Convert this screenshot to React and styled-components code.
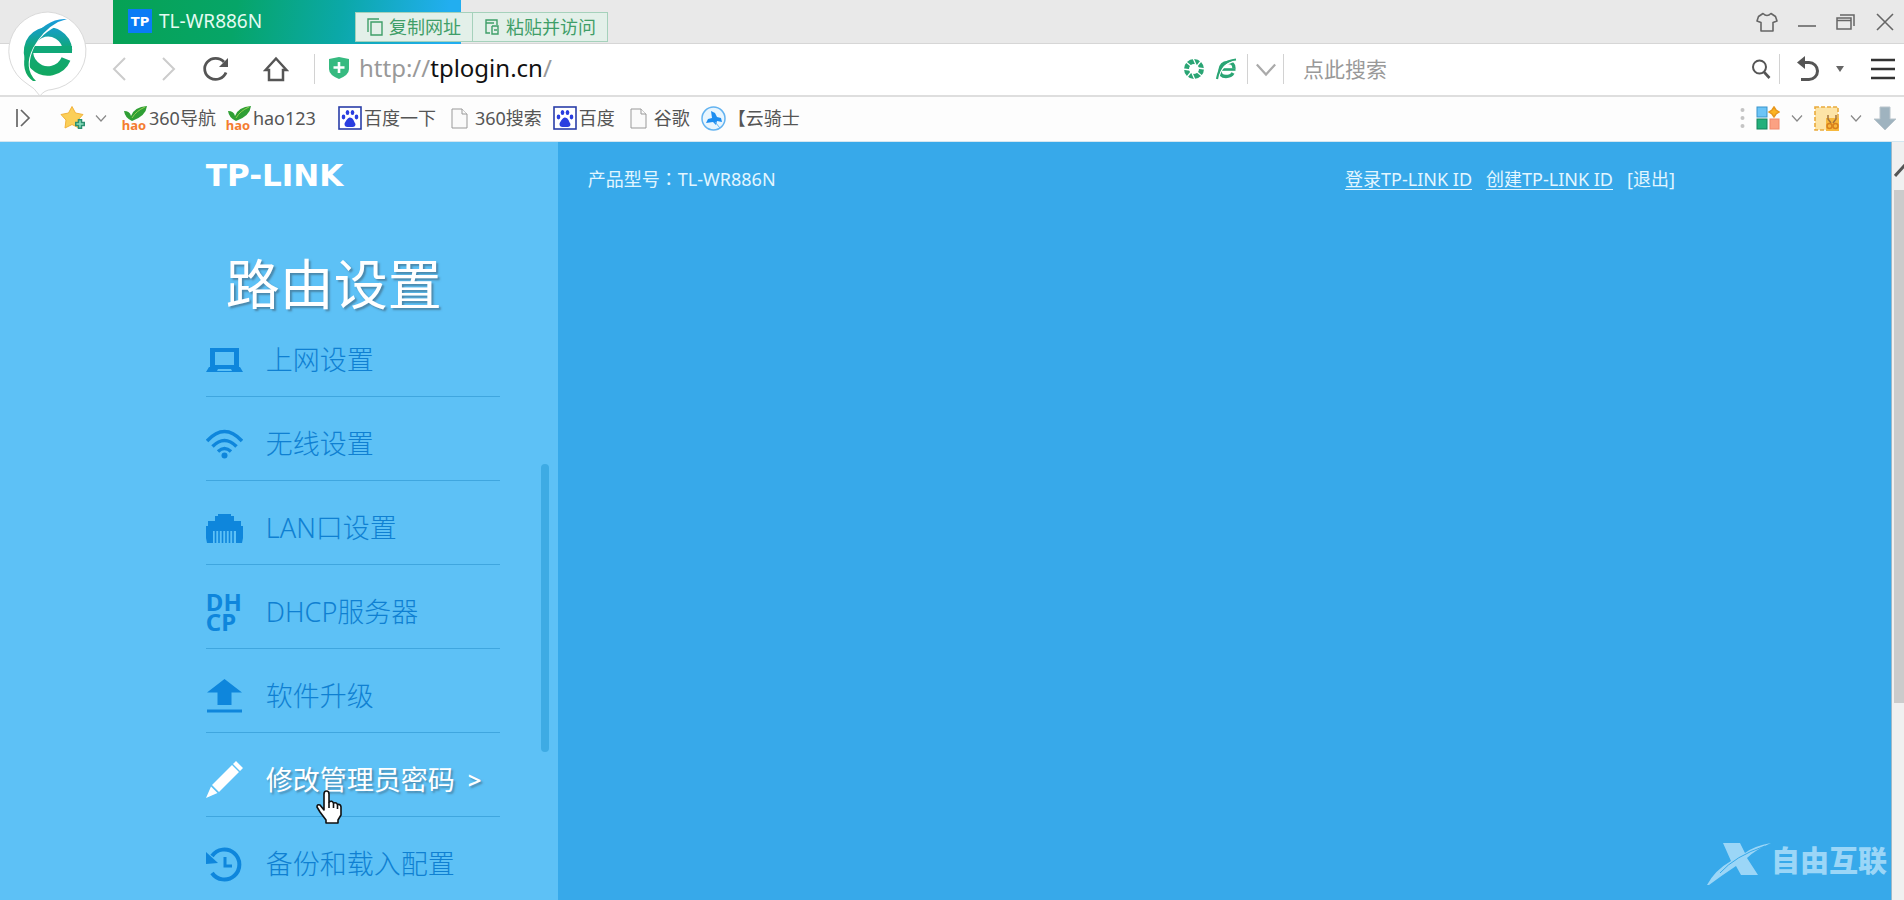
import React from 'react';
import styled, { createGlobalStyle } from 'styled-components';

const GlobalStyle = createGlobalStyle`
  * {
    box-sizing: border-box;
  }

  body {
    margin: 0;
    overflow: hidden;
    font-family: 'Noto Sans', 'Noto Sans CJK SC', sans-serif;
    font-size: 18px;
  }

  button {
    border: none;
    padding: 0;
    background: transparent;
    font: inherit;
    color: inherit;
    cursor: pointer;
  }

  a {
    color: inherit;
    text-decoration: none;
  }

  svg {
    display: block;
    flex: none;
  }
`;

const Window = styled.div`
  position: relative;
  display: flex;
  flex-direction: column;
  height: 100vh;
`;

const BrowserBadge = styled.button`
  position: absolute;
  top: 10px;
  left: 6px;
  z-index: 2;
`;

const TitleBar = styled.header`
  display: flex;
  flex: none;
  justify-content: space-between;
  height: 44px;
  padding-left: 113px;
  background: #e9e9e9;
  border-bottom: 1px solid #d6d6d6;
`;

const Tab = styled.div`
  position: relative;
  display: flex;
  align-items: center;
  gap: 7px;
  width: 348px;
  height: 44px;
  padding: 0 15px 2px;
  background: linear-gradient(100deg, #06a254 0%, #06a568 35%, #0ba8a8 65%, #22aef0 95%);
  color: #e4fbf2;
  font-size: 19px;
`;

const TabIcon = styled.span`
  display: flex;
  align-items: center;
  justify-content: center;
  width: 24px;
  height: 24px;
  background: #0a7cf5;
  color: #fff;
  font: bold 13px 'DejaVu Sans', sans-serif;
`;

const PasteMenu = styled.div`
  position: absolute;
  top: 12px;
  left: 242px;
  z-index: 1;
  display: flex;
  height: 30px;
  border: 1px solid #a5d1bb;
  background: #e3f0e9;
  color: #3f9e68;
  font-size: 18px;
`;

const PasteItem = styled.button`
  display: flex;
  align-items: center;
  gap: 6px;
  padding: 0 11px;
  line-height: 26px;
  white-space: nowrap;

  & + & {
    border-left: 1px solid #a5d1bb;
  }
`;

const WindowButtons = styled.div`
  display: flex;
  align-items: center;
  gap: 19px;
  padding-right: 9px;
  color: #666;
`;

const AddressBar = styled.div`
  display: flex;
  flex: none;
  align-items: center;
  height: 53px;
  padding: 0 8px 2px 94px;
  background: #fff;
  border-bottom: 2px solid #dedede;
  color: #555;
`;

const ToolButton = styled.button`
  display: flex;
  align-items: center;
  justify-content: ${props => props.$align || 'center'};
  width: ${props => props.$width || 44}px;
  height: 40px;
  color: ${props => (props.$faded ? '#ccc' : '#555')};
`;

const Divider = styled.span`
  flex: none;
  width: 1px;
  height: 30px;
  background: #d2d2d2;
`;

const Address = styled.label`
  display: flex;
  flex: 1;
  align-items: center;
  margin-left: 13px;
  padding-bottom: 2px;
  color: #999;
  font-size: 24px;
  line-height: 32px;

  & > svg {
    margin-right: 9px;
  }
`;

const AddressInput = styled.input`
  field-sizing: content;
  border: none;
  padding: 0;
  background: transparent;
  color: #111;
  font: inherit;
  outline: none;
`;

const AddressActions = styled.div`
  display: flex;
  align-items: center;
  gap: 10px;
  margin-right: 10px;
`;

const SearchInput = styled.input`
  width: 28%;
  max-width: 459px;
  border: none;
  padding: 0 0 0 19px;
  color: #555;
  font: inherit;
  font-size: 21px;
  outline: none;

  &::placeholder {
    color: #999;
    opacity: 1;
  }
`;

const BookmarkBar = styled.nav`
  display: flex;
  flex: none;
  align-items: center;
  justify-content: space-between;
  height: 45px;
  padding: 0 7px 2px 16px;
  background: #fdfdfd;
  border-bottom: 1px solid #d4e6f0;
  color: #555;
`;

const Bookmarks = styled.div`
  display: flex;
  align-items: center;
`;

const Bookmark = styled.a`
  display: flex;
  align-items: center;
  gap: ${props => props.$gap || 2}px;
  margin-left: ${props => props.$space || 9}px;
  line-height: 26px;
  white-space: nowrap;
`;

const StarButton = styled.button`
  display: flex;
  align-items: center;
  gap: 9px;
  margin: 0 5px 0 29px;
`;

const Extensions = styled.div`
  display: flex;
  align-items: center;
  gap: 11px;
`;

const Page = styled.div`
  display: flex;
  flex: 1;
  min-height: 0;
`;

const Sidebar = styled.aside`
  display: flex;
  flex: none;
  justify-content: flex-end;
  width: 29.3%;
  padding-right: 9px;
  background: #5dc1f6;
  overflow: hidden;
`;

const SidebarBody = styled.div`
  width: 335px;
`;

const Brand = styled.div`
  margin-top: 20px;
  color: #fff;
  font: bold 31px/26px 'DejaVu Sans', sans-serif;
`;

const Heading = styled.h1`
  margin: 67px 0 0 20px;
  color: #fff;
  font-size: 54px;
  font-weight: 400;
  line-height: 58px;
  text-shadow: 2px 2px 2px rgba(60, 90, 110, .55);
`;

const Menu = styled.ul`
  width: 294px;
  margin: 0;
  padding: 0;
  list-style: none;
`;

const MenuItem = styled.li`
  position: relative;
  border-bottom: 1px solid #3fa6df;
`;

const MenuLink = styled.a`
  display: flex;
  align-items: center;
  gap: 23px;
  height: 83px;
  padding-top: 10px;
  color: ${props => (props.$active ? '#fff' : '#0f80d2')};
  font-size: 27px;
  font-weight: ${props => (props.$active ? 400 : 300)};
  line-height: 36px;
  white-space: nowrap;
  text-shadow: ${props => (props.$active ? '2px 2px 2px rgba(60, 90, 110, .5)' : 'none')};

  & > svg {
    color: ${props => (props.$active ? '#fff' : '#0e86dc')};
  }
`;

const Arrow = styled.span`
  margin-left: -10px;
  font-size: 24px;
  font-weight: 600;
`;

const DhcpMark = styled.span`
  width: 37px;
  color: #0e86dc;
  font: bold 24px/20px 'Noto Sans', sans-serif;
  white-space: pre-line;
`;

const HandCursor = styled.svg`
  position: absolute;
  top: 57px;
  left: 110px;
`;

const SidebarThumb = styled.div`
  width: 8px;
  height: 288px;
  margin-top: 322px;
  border-radius: 4px;
  background: #3eabe4;
`;

const Main = styled.main`
  position: relative;
  flex: 1;
  background: #37a9ea;
  color: #e2f6ff;
`;

const InfoBar = styled.div`
  display: flex;
  justify-content: space-between;
  max-width: 1117px;
  padding: 24px 0 0 30px;
  line-height: 26px;
`;

const Model = styled.span`
  font-family: 'Noto Sans', 'Noto Sans CJK TC', sans-serif;
`;

const Account = styled.div`
  display: flex;
  gap: 14px;
`;

const AccountLink = styled.a`
  text-decoration: ${props => (props.$plain ? 'none' : 'underline')};
  text-underline-offset: 3px;
`;

const Watermark = styled.div`
  position: absolute;
  right: 4px;
  bottom: 15px;
  display: flex;
  align-items: flex-start;
  color: #9bd6f7;
  font: 900 29px/32px 'Noto Sans CJK SC', sans-serif;
`;

const Scrollbar = styled.div`
  display: flex;
  flex-direction: column;
  flex: none;
  width: 13px;
  padding-left: 2px;
  background: #f0f0f0;
  border-left: 1px solid #9db9c9;
  overflow: hidden;
`;

const ScrollUp = styled.button`
  display: flex;
  align-items: center;
  width: 20px;
  height: 48px;
  padding-top: 10px;
`;

const ScrollThumb = styled.div`
  width: 13px;
  height: 513px;
  background: #cbcbcb;
`;

const Chevron = ({ size = 12, color = '#888' }) => (
  <svg width={size} height={size} viewBox="0 0 12 12" fill="none" stroke={color} strokeWidth="1.2">
    <path d="M1 3.5l5 5.5 5-5.5" />
  </svg>
);

const BrowserLogo = () => (
  <svg width="84" height="88" viewBox="0 0 84 88">
    <defs>
      <linearGradient id="logo" gradientUnits="userSpaceOnUse" x1="42" y1="8" x2="42" y2="66">
        <stop offset="0" stopColor="#1c9be0" />
        <stop offset=".25" stopColor="#14a0b4" />
        <stop offset=".5" stopColor="#10a878" />
        <stop offset="1" stopColor="#12a860" />
      </linearGradient>
    </defs>
    <path
      d="M42 2a40 39 0 0 1 4 77.500Q38 80 34 86Q29 78 20 73A40 39 0 0 1 42 2z"
      fill="#fff"
      stroke="#dadada"
    />
    <path
      d="M61.500 39.500A19.500 19.500 0 1 0 60 48"
      transform="translate(0 1)"
      fill="none"
      stroke="url(#logo)"
      strokeWidth="9.500"
    />
    <path d="M26 36h40v7H26z" fill="#10a878" />
    <path d="M60 10Q36 17 26 36Q17 54 25 71" fill="none" stroke="#fff" strokeWidth="5" />
    <path d="M61 9Q50 8 40 15Q25 24 20 41Q14 62 27 71H30Q17 58 27 38Q37 20 52 12z" fill="url(#logo)" />
  </svg>
);

const Shield = () => (
  <svg width="22" height="24" viewBox="0 0 22 24">
    <path d="M11 1L21 3v10q0 6-10 10Q1 19 1 13V3z" fill="#36ba80" />
    <path d="M11 6v11M5.500 11.500h11" stroke="#fff" strokeWidth="2.600" />
  </svg>
);

const HaoIcon = styled.span`
  display: flex;
  flex-direction: column;
  align-items: center;
  width: 26px;
  color: #f47c30;
  font: bold 13px/10px 'Noto Sans', sans-serif;

  & > svg {
    margin-bottom: -1px;
  }
`;

const Hao = () => (
  <HaoIcon>
    <svg width="26" height="15" viewBox="0 0 26 15">
      <path d="M3 5q6 0 7 5Q13 1 26 0q-1 10-15 15Q4 12 3 5z" fill="#2f9f35" />
      <path d="M11 12Q15 5 24 1" fill="none" stroke="#91cf50" />
    </svg>
    hao
  </HaoIcon>
);

const Paw = () => (
  <svg width="24" height="24" viewBox="0 0 24 24" fill="#2a3ee0">
    <rect x="1" y="1" width="22" height="22" fill="#fff" stroke="#2a3ea8" strokeWidth="1.600" />
    <ellipse cx="5.500" cy="11" rx="1.800" ry="2.400" />
    <ellipse cx="9.500" cy="6.500" rx="1.800" ry="2.600" />
    <ellipse cx="14.500" cy="6.500" rx="1.800" ry="2.600" />
    <ellipse cx="18.500" cy="11" rx="1.800" ry="2.400" />
    <path d="M12 11.500q2.500 0 3.500 2.500t2 4q0 3-3 3h-5q-3 0-3-3 0-1 2-4t3.500-2.500z" />
  </svg>
);

const Doc = () => (
  <svg width="17" height="21" viewBox="0 0 17 21" fill="#fafafa" stroke="#999">
    <path d="M1 1h10l5 5v14H1z" />
    <path d="M11 1v5h5" />
  </svg>
);

const Knight = () => (
  <svg width="25" height="25" viewBox="0 0 25 25">
    <circle cx="12.500" cy="12.500" r="11.500" fill="#e8f5fe" stroke="#63b3f0" strokeWidth="1.500" />
    <path d="M10 5l4 2 2 4 4 1 1 4-5-1-1 4-3-3-7 1 2-4 4-1z" fill="#1c8df0" />
    <path d="M14 16l5 6" stroke="#63b3f0" />
  </svg>
);

const Star = () => (
  <svg width="26" height="26" viewBox="0 0 26 26">
    <path
      d="M12 1.500l3.500 6.500 7.500 1.500-5 5.500 1 8-7-3.500L5 23l1-8L1 9.500 8.500 8z"
      fill="#fbcf58"
      stroke="#f2b33c"
      strokeLinejoin="round"
    />
    <path d="M20 14v10M15 19h10" stroke="#2c8f70" strokeWidth="4.500" />
    <path d="M20 15.500v7M16.500 19h7" stroke="#8ce0bd" strokeWidth="1.500" />
  </svg>
);

const Shutter = () => (
  <svg width="22" height="22" viewBox="0 0 22 22">
    <circle cx="11" cy="11" r="7.500" fill="none" stroke="#2aa574" strokeWidth="5" />
    <path
      d="M10 0l3 7M18 3l-4 5M22 11l-7-1M19 18l-5-4M12 22l-3-7M4 19l4-5M0 11l7 1M3 4l5 4"
      stroke="#fff"
      strokeWidth="1.300"
    />
  </svg>
);

const SmallE = () => (
  <svg width="22" height="22" viewBox="0 0 22 22" fill="none" stroke="#2aa574">
    <path d="M19 10.500Q19 4 12.500 4.500Q6 5 5 12Q4.500 18.500 11 18.500q5 0 7-3.500" strokeWidth="3.400" />
    <path d="M6 11.500h14.500" strokeWidth="2.600" />
    <path d="M20 3Q6 6 3.500 21" stroke="#fff" strokeWidth="1.400" />
    <path d="M21 1.500Q5 3 2 21" strokeWidth="2.200" />
  </svg>
);

const Laptop = () => (
  <svg width="37" height="26" viewBox="0 0 37 26" fill="currentColor">
    <path d="M4 1h29v19H4zM9 5v13h19V5z" fillRule="evenodd" />
    <path d="M3 20h31l3 5H0zM12 22l-1 2h15l-1-2z" fillRule="evenodd" />
  </svg>
);

const Wifi = () => (
  <svg width="37" height="30" viewBox="0 0 37 30" fill="none" stroke="currentColor" strokeWidth="3.500">
    <path d="M1 12Q18.500-7 36 12M6.500 17.500q12-12 24 0M12 22.500q6.500-6 13 0" />
    <circle cx="18.500" cy="26.500" r="3" fill="currentColor" stroke="none" />
  </svg>
);

const Ethernet = () => (
  <svg width="37" height="30" viewBox="0 0 37 30" fill="currentColor">
    <path d="M12 1h13v2h3v5h7v5h2v12l-1 5h-6V18H7v12H1l-1-5V13h2V8h7V3h3z" />
    <path d="M9.500 18v12M13 18v12M16.500 18v12M20 18v12M23.500 18v12M27 18v12" stroke="currentColor" strokeWidth="1.600" />
  </svg>
);

const Upgrade = () => (
  <svg width="37" height="34" viewBox="0 0 37 34" fill="currentColor">
    <path d="M18.500 0L36 13.500H25.500V26h-14V13.500H1z" />
    <path d="M1 30.500h35v3H1z" />
  </svg>
);

const Pencil = () => (
  <svg width="37" height="37" viewBox="0 0 37 37" fill="currentColor">
    <path d="M30 0l7 7-3 3-7-7zM26 4l7 7-20 20-7-7zM5 25.500l6.500 6.500L0 37z" />
  </svg>
);

const Restore = () => (
  <svg width="37" height="36" viewBox="0 0 37 36" fill="none" stroke="currentColor">
    <path d="M6 10a15 15 0 1 1 0 17" strokeWidth="4" />
    <path d="M19 11v9h7" strokeWidth="3" />
    <path d="M0 6v12l12-1z" fill="currentColor" stroke="none" />
  </svg>
);

const menu = [
  { label: '上网设置', icon: <Laptop /> },
  { label: '无线设置', icon: <Wifi /> },
  { label: 'LAN口设置', icon: <Ethernet /> },
  { label: 'DHCP服务器', icon: <DhcpMark>{'DH\nCP'}</DhcpMark> },
  { label: '软件升级', icon: <Upgrade /> },
  { label: '修改管理员密码', icon: <Pencil />, active: true },
  { label: '备份和载入配置', icon: <Restore /> }
];

const bookmarks = [
  { label: '360导航', icon: <Hao /> },
  { label: 'hao123', icon: <Hao /> },
  { label: '百度一下', icon: <Paw />, space: 22 },
  { label: '360搜索', icon: <Doc />, space: 15, gap: 7 },
  { label: '百度', icon: <Paw />, space: 11 },
  { label: '谷歌', icon: <Doc />, space: 15, gap: 7 },
  { label: '【云骑士', icon: <Knight />, space: 11 }
];

const Chrome = () => (
  <>
    <BrowserBadge aria-label="浏览器">
      <BrowserLogo />
    </BrowserBadge>

    <TitleBar>
      <Tab>
        <TabIcon>TP</TabIcon>
        TL-WR886N
        <PasteMenu>
          <PasteItem>
            <svg width="16" height="18" viewBox="0 0 16 18" fill="none" stroke="currentColor" strokeWidth="1.400">
              <path d="M4 4h11v13H4zM1 14V1h11" />
            </svg>
            复制网址
          </PasteItem>
          <PasteItem>
            <svg width="16" height="18" viewBox="0 0 16 18" fill="none" stroke="currentColor" strokeWidth="1.400">
              <path d="M6 15H2V2h11v5M2 5h8M8 8h6v8H8V8M10 12h3" />
            </svg>
            粘贴并访问
          </PasteItem>
        </PasteMenu>
      </Tab>

      <WindowButtons>
        <button aria-label="皮肤">
          <svg width="22" height="20" viewBox="0 0 22 20" fill="none" stroke="currentColor" strokeWidth="1.600">
            <path d="M7 1.500q4 4 8 0l4.500 3L21 9l-4 1.500V19H5v-8.500L1 9l1.500-4.500z" strokeLinejoin="round" />
          </svg>
        </button>
        <button aria-label="最小化">
          <svg width="20" height="20" viewBox="0 0 20 20" stroke="currentColor" strokeWidth="1.600">
            <path d="M1 14h18" />
          </svg>
        </button>
        <button aria-label="还原">
          <svg width="20" height="18" viewBox="0 0 20 18" fill="none" stroke="currentColor" strokeWidth="1.500">
            <path d="M1 5h14v11H1zM1 7.500h14M4 2h14v11" />
          </svg>
        </button>
        <button aria-label="关闭">
          <svg width="20" height="18" viewBox="0 0 20 18" stroke="currentColor" strokeWidth="1.600">
            <path d="M2 1l16 16M18 1L2 17" />
          </svg>
        </button>
      </WindowButtons>
    </TitleBar>

    <AddressBar>
      <ToolButton $width={50} $faded aria-label="后退">
        <svg width="14" height="24" viewBox="0 0 14 24" fill="none" stroke="currentColor" strokeWidth="2">
          <path d="M13 1L2 12l11 11" />
        </svg>
      </ToolButton>
      <ToolButton $width={50} $faded aria-label="前进">
        <svg width="14" height="24" viewBox="0 0 14 24" fill="none" stroke="currentColor" strokeWidth="2">
          <path d="M1 1l11 11L1 23" />
        </svg>
      </ToolButton>
      <ToolButton aria-label="刷新">
        <svg width="28" height="26" viewBox="0 0 28 26" fill="none" stroke="currentColor" strokeWidth="2.800">
          <path d="M24 16.500A11 10.500 0 1 1 22 6" />
          <path d="M26 2v9h-9z" fill="currentColor" stroke="none" />
        </svg>
      </ToolButton>
      <ToolButton $width={76} aria-label="主页">
        <svg width="26" height="26" viewBox="0 0 26 26" fill="none" stroke="currentColor" strokeWidth="2.500">
          <path d="M13 2.500L2.500 14H6v10h14V14h3.500z" />
        </svg>
      </ToolButton>
      <Divider />
      <Address>
        <Shield />
        http://
        <AddressInput defaultValue="tplogin.cn" aria-label="网址" />
        /
      </Address>
      <AddressActions>
        <Shutter />
        <SmallE />
      </AddressActions>
      <Divider />
      <ToolButton $width={35} aria-label="展开">
        <Chevron size={22} color="#aaa" />
      </ToolButton>
      <Divider />
      <SearchInput placeholder="点此搜索" aria-label="搜索" />
      <ToolButton $width={36} aria-label="搜索">
        <svg width="20" height="20" viewBox="0 0 20 20" fill="none" stroke="currentColor" strokeWidth="2">
          <circle cx="8.500" cy="8" r="6.500" />
          <path d="M13 13l5.500 6" strokeWidth="2.600" />
        </svg>
      </ToolButton>
      <Divider />
      <ToolButton $width={56} aria-label="恢复">
        <svg width="24" height="26" viewBox="0 0 24 26" fill="none" stroke="currentColor" strokeWidth="3">
          <path d="M5 6.500h8a8.500 8.500 0 0 1 0 17H5" />
          <path d="M9 0v13L1 6.500z" fill="currentColor" stroke="none" />
        </svg>
      </ToolButton>
      <svg width="8" height="6" viewBox="0 0 8 6">
        <path d="M0 0h8L4 6z" fill="#666" />
      </svg>
      <ToolButton $width={52} $align="flex-end" aria-label="菜单">
        <svg width="26" height="24" viewBox="0 0 26 24" stroke="#333" strokeWidth="2.600">
          <path d="M1 3h24M1 12h24M1 21h24" />
        </svg>
      </ToolButton>
    </AddressBar>

    <BookmarkBar>
      <Bookmarks>
        <svg width="15" height="18" viewBox="0 0 15 18" fill="none" stroke="#666" strokeWidth="1.700">
          <path d="M1 0v18M5 1l8 8-8 8" />
        </svg>
        <StarButton aria-label="收藏">
          <Star />
          <Chevron />
        </StarButton>
        {bookmarks.map(({ label, icon, space, gap }) => (
          <Bookmark key={label} href="#" $space={space} $gap={gap}>
            {icon}
            {label}
          </Bookmark>
        ))}
      </Bookmarks>

      <Extensions>
        <svg width="5" height="22" viewBox="0 0 5 22" fill="#c4c4c4">
          <circle cx="2.500" cy="3" r="2" />
          <circle cx="2.500" cy="11" r="2" />
          <circle cx="2.500" cy="19" r="2" />
        </svg>
        <svg width="24" height="24" viewBox="0 0 24 24">
          <rect x="1" y="1" width="10" height="10" fill="#6cc4f6" stroke="#3894cc" />
          <path d="M18 1l2 3 3 2-3 2-2 3-2-3-3-2 3-2z" fill="#fbb423" stroke="#e8971c" strokeWidth="1.500" />
          <rect x="1" y="13" width="10" height="10" fill="#23b07b" stroke="#13835a" />
          <rect x="14" y="13" width="9" height="10" fill="#fba183" stroke="#f0886a" />
        </svg>
        <Chevron />
        <svg width="25" height="25" viewBox="0 0 25 25" fill="none">
          <rect x="1" y="1" width="23" height="23" fill="#fde4a6" stroke="#e9ab3c" strokeWidth="1.600" strokeDasharray="4 2" />
          <path d="M12 12h13v13H12z" fill="#f7b93e" />
          <path d="M14 9v4l3 4M22 9v4l-3 4" stroke="#a5733a" strokeWidth="1.500" />
          <circle cx="15.500" cy="20" r="2.500" stroke="#d9801c" strokeWidth="1.500" />
          <circle cx="21.500" cy="20" r="2.500" stroke="#d9801c" strokeWidth="1.500" />
        </svg>
        <Chevron />
        <svg width="24" height="25" viewBox="0 0 24 25">
          <path d="M7 1h10v12h6L12 24 1 13h6z" fill="#9fb3bf" stroke="#bac5cc" />
        </svg>
      </Extensions>
    </BookmarkBar>
  </>
);

const Cursor = () => (
  <HandCursor width="27" height="34" viewBox="0 0 27 34" fill="#fff" stroke="#111" strokeWidth="1.600">
    <path
      d="M8 20V4q0-3 2.500-3T13 4v8q3-2 4.500 1 3-1 4 1.500 3-.5 3.500 2.500v8l-3 5v3H10v-3l-6-8-3-5q0-3 3-2z"
      strokeLinejoin="round"
    />
    <path d="M13 12v6M17.500 13v5M21.500 14.500V19" fill="none" />
  </HandCursor>
);

export default function App() {
  return (
    <Window>
      <GlobalStyle />
      <Chrome />

      <Page>
        <Sidebar>
          <SidebarBody>
            <Brand>TP-LINK</Brand>
            <Heading>路由设置</Heading>
            <Menu>
              {menu.map(({ label, icon, active }) => (
                <MenuItem key={label}>
                  <MenuLink href="#" $active={active}>
                    {icon}
                    {label}
                    {active && <Arrow>&gt;</Arrow>}
                  </MenuLink>
                  {active && <Cursor />}
                </MenuItem>
              ))}
            </Menu>
          </SidebarBody>
          <SidebarThumb />
        </Sidebar>

        <Main>
          <InfoBar>
            <Model>产品型号：TL-WR886N</Model>
            <Account>
              <AccountLink href="#">登录TP-LINK ID</AccountLink>
              <AccountLink href="#">创建TP-LINK ID</AccountLink>
              <AccountLink href="#" $plain>[退出]</AccountLink>
            </Account>
          </InfoBar>

          <Watermark>
            <svg width="64" height="42" viewBox="0 0 64 42" fill="currentColor">
              <path d="M16 0h17l5 10Q47 3 64 0 48 7 40 15l11 17H34l-5-9Q14 33 2 42H0Q8 27 24 18z" />
              <path d="M13 30Q28 13 58 3" fill="none" stroke="#37a9ea" />
            </svg>
            自由互联
          </Watermark>
        </Main>

        <Scrollbar>
          <ScrollUp aria-label="向上滚动">
            <svg width="20" height="14" viewBox="0 0 20 14" fill="none" stroke="#555" strokeWidth="3">
              <path d="M1 12L10 2l9 10" />
            </svg>
          </ScrollUp>
          <ScrollThumb />
        </Scrollbar>
      </Page>
    </Window>
  );
}
